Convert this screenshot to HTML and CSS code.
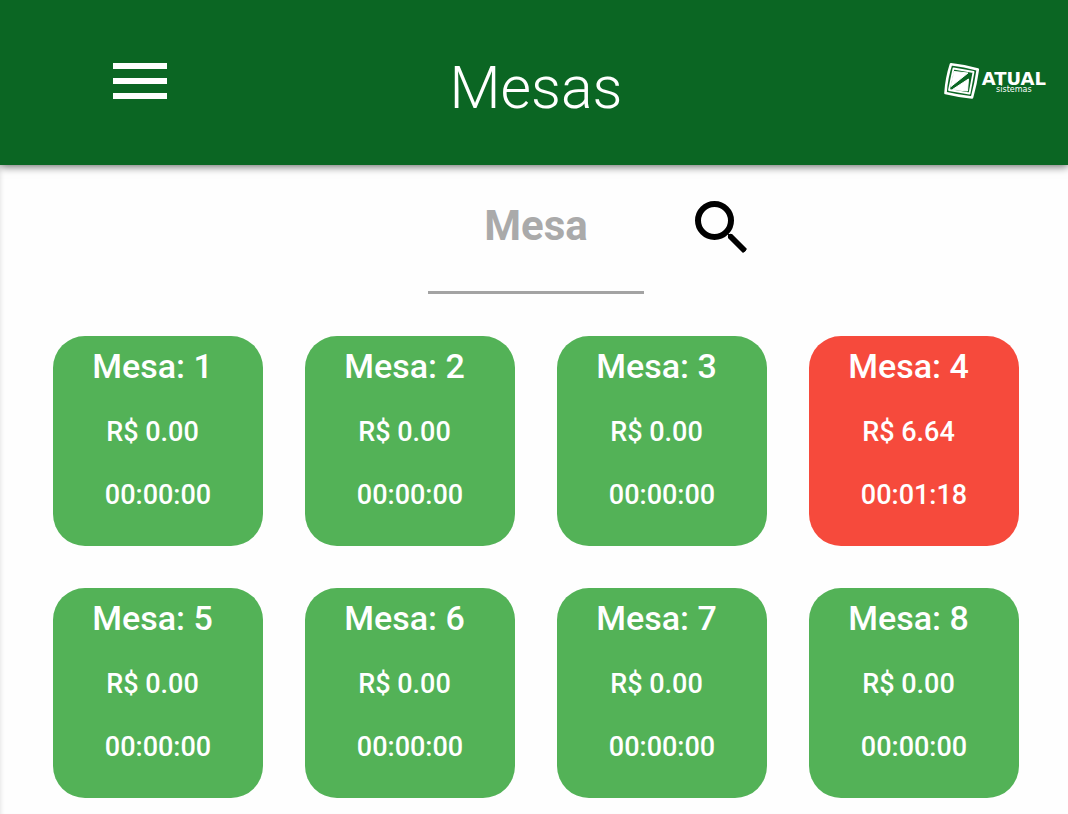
FILE: index.html
```html
<!DOCTYPE html>
<html lang="pt-BR">
<head>
<meta charset="utf-8">
<meta name="viewport" content="width=device-width, initial-scale=1">
<title>Mesas</title>
<link rel="stylesheet" href="styles.css">
</head>
<body>
<header class="topbar">
  <button class="menu-button" type="button" aria-label="Menu">
    <svg width="54" height="36" viewBox="0 0 54 36" fill="currentColor"><path d="M0 0h54v6H0zM0 15h54v6H0zM0 30h54v6H0z"/></svg>
  </button>
  <h1 class="page-title">Mesas</h1>
  <a class="brand" href="#" aria-label="Atual Sistemas">
    <svg width="36" height="38" viewBox="0 0 36 38" fill="none" stroke-linejoin="round">
      <path d="M7 2.200Q20 3.500 33.800 7.500Q32 21 28 35.500Q14 34 1.500 31Q2.500 16 7 2.200Z" stroke="#fff" stroke-width="2.600"/>
      <path d="M9.500 6.500 29.500 10 25.500 31.500 5 28Z" stroke="#fff" stroke-width="1.800"/>
      <path d="M10 9.500 24 11 7 24.500Z" fill="#fff" stroke="#fff"/>
      <path d="M24.500 17 23.500 29 8.500 27.500Z" fill="#fff" stroke="#fff"/>
    </svg>
    <span class="brand-text"><span class="brand-name">ATUAL</span><span class="brand-sub">sistemas</span></span>
  </a>
</header>
<main class="content">
  <form class="search">
    <input class="search-input" type="text" placeholder="Mesa" aria-label="Mesa">
    <button class="search-button" type="button" aria-label="Buscar">
      <svg width="52" height="52" viewBox="0 0 52 52" fill="none" stroke="currentColor"><circle cx="19.500" cy="19.500" r="16.500" stroke-width="6"/><path d="M33 36v-3h4L52 48l-4 4-15-15z" fill="currentColor" stroke="none"/><path d="m35.500 35.500 13 13" stroke-width="5" stroke-linecap="round"/></svg>
    </button>
  </form>
  <section class="tables" aria-label="Mesas">
    <button class="card" type="button"><span class="card-name">Mesa: 1</span><span class="card-total">R$ 0.00</span><span class="card-time">00:00:00</span></button>
    <button class="card" type="button"><span class="card-name">Mesa: 2</span><span class="card-total">R$ 0.00</span><span class="card-time">00:00:00</span></button>
    <button class="card" type="button"><span class="card-name">Mesa: 3</span><span class="card-total">R$ 0.00</span><span class="card-time">00:00:00</span></button>
    <button class="card card-busy" type="button"><span class="card-name">Mesa: 4</span><span class="card-total">R$ 6.64</span><span class="card-time">00:01:18</span></button>
    <button class="card" type="button"><span class="card-name">Mesa: 5</span><span class="card-total">R$ 0.00</span><span class="card-time">00:00:00</span></button>
    <button class="card" type="button"><span class="card-name">Mesa: 6</span><span class="card-total">R$ 0.00</span><span class="card-time">00:00:00</span></button>
    <button class="card" type="button"><span class="card-name">Mesa: 7</span><span class="card-total">R$ 0.00</span><span class="card-time">00:00:00</span></button>
    <button class="card" type="button"><span class="card-name">Mesa: 8</span><span class="card-total">R$ 0.00</span><span class="card-time">00:00:00</span></button>
  </section>
</main>
</body>
</html>
```

FILE: styles.css
```css
* { box-sizing: border-box; }
body {
  margin: 0;
  background: #fefefe;
  font-family: Roboto, "Liberation Sans", sans-serif;
}
button {
  border: 0;
  padding: 0;
  background: none;
  font: inherit;
  color: inherit;
  cursor: pointer;
}
svg { display: block; flex: none; }
.topbar {
  display: grid;
  grid-template-columns: 1fr auto 1fr;
  align-items: start;
  padding: 52px 22px 42px 26px;
  background: #0b6623;
  color: #fff;
  box-shadow: 0 2px 8px rgba(0, 0, 0, .55);
}
.menu-button {
  justify-self: start;
  margin-left: 87px;
  padding: 11px 0;
}
.page-title {
  margin: 0;
  font-size: 59px;
  font-weight: 300;
  line-height: 71px;
}
.brand {
  justify-self: end;
  display: flex;
  gap: 2px;
  margin-top: 10px;
  color: #fff;
  text-decoration: none;
}
.brand-text {
  display: flex;
  flex-direction: column;
  align-items: center;
  padding-top: 10px;
  font-family: "DejaVu Sans", sans-serif;
}
.brand-name { font-size: 18px; font-weight: 700; line-height: 14px; }
.brand-sub { font-size: 8px; line-height: 8px; }
.content {
  padding: 36px 49px 16px 53px;
  box-shadow: inset 4px 0 4px -3px rgba(0, 0, 0, .1);
}
.search {
  display: grid;
  grid-template-columns: 1fr 216px 1fr;
  align-items: start;
}
.search-input {
  grid-column: 2;
  width: 100%;
  height: 93px;
  padding: 0 0 41px;
  border: 0;
  border-bottom: 3px solid #a3a3a3;
  border-radius: 0;
  outline: 0;
  background: none;
  color: #333;
  font: 700 42px Roboto, "Liberation Sans", sans-serif;
  text-align: center;
}
.search-input::placeholder { color: #aaa; opacity: 1; }
.search-button {
  justify-self: start;
  margin-left: 51px;
  color: #000;
}
.tables {
  display: grid;
  grid-template-columns: repeat(4, 1fr);
  gap: 42px;
  margin-top: 42px;
}
.card {
  display: flex;
  flex-direction: column;
  align-items: center;
  aspect-ratio: 1;
  padding-top: 10px;
  border-radius: 32px;
  background: #53b257;
  color: #fff;
  font-size: 27px;
  font-weight: 500;
  line-height: 32px;
}
.card-busy { background: #f64a3c; }
.card-name { padding-right: 11px; font-size: 34px; line-height: 40px; }
.card-total { margin-top: 30px; padding-right: 11px; }
.card-time { margin-top: 31px; }
```
